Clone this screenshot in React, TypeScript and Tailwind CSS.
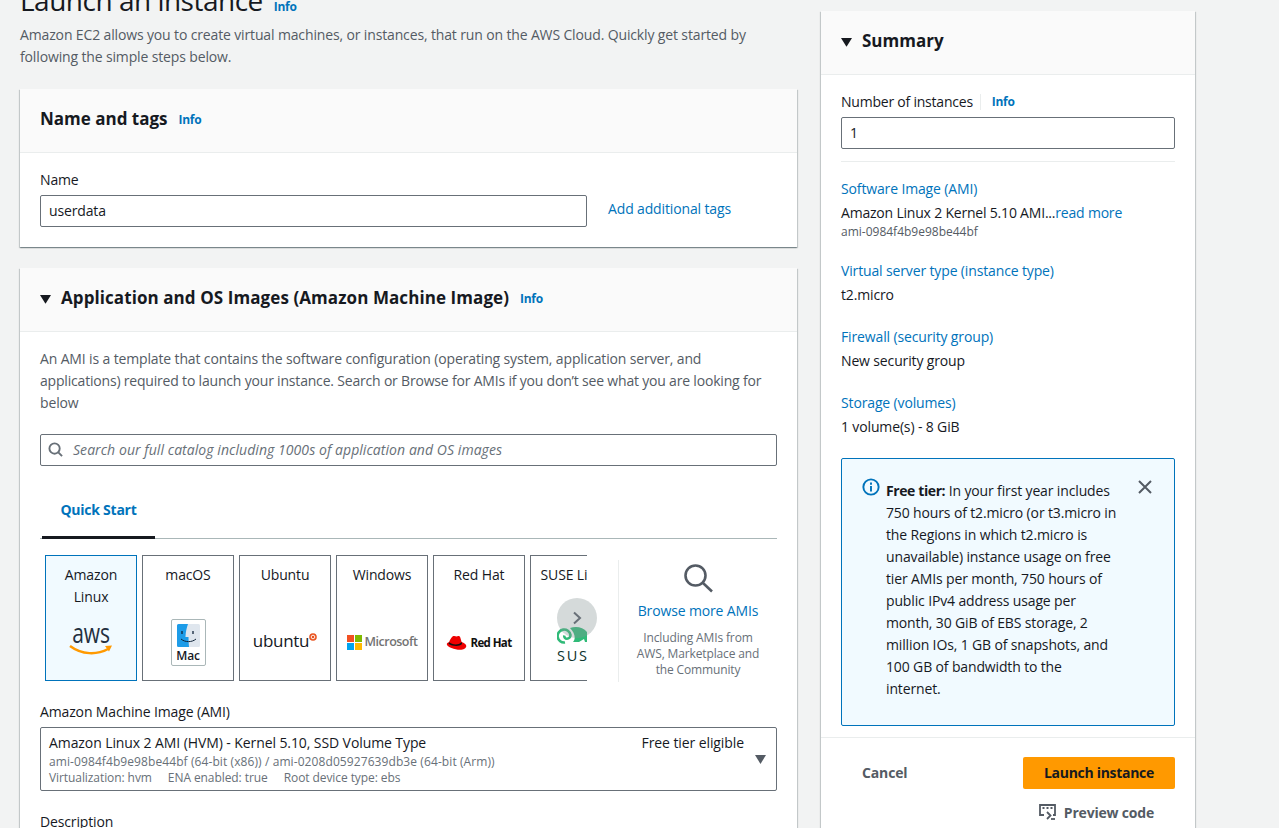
import React from "react";

function Info({ cls = "" }: { cls?: string }) {
  return <span className={"text-[12px] font-bold tracking-[-0.3px] text-[#0073bb] " + cls}>Info</span>;
}

function Caret({ size = 11 }: { size?: number }) {
  return (
    <svg width={size} height={size * 0.8} viewBox="0 0 10 8" className="shrink-0">
      <path d="M0 0h10L5 8z" fill="#16191f" />
    </svg>
  );
}

function Card({ title, active, children }: { title: string; active?: boolean; children: React.ReactNode }) {
  return (
    <div className={"w-[92px] h-[126px] shrink-0 border flex flex-col items-center pt-[8px] text-[14px] leading-[22px] text-center " + (active ? "border-[#0073bb] bg-[#f1faff]" : "border-[#687078] bg-white")}>
      <div className={"h-[44px] " + (active ? "whitespace-normal" : "whitespace-nowrap")}>{title}</div>
      <div className="flex-1 w-full flex items-center justify-center">{children}</div>
    </div>
  );
}

function Aws() {
  return (
    <div className="flex flex-col items-center mt-[-9px]">
      <span className="text-[21px] leading-[20px] font-normal text-[#232f3e] scale-y-[1.3]">aws</span>
      <svg width="44" height="12" viewBox="0 0 44 12" className="mt-[1px]">
        <path d="M1 2c12 9 27 9 38 3" stroke="#ff9900" strokeWidth="2.4" fill="none" />
        <path d="M36 2l7-.5-3 6z" fill="#ff9900" />
      </svg>
    </div>
  );
}

function Mac() {
  return (
    <div className="w-[35px] h-[47px] border border-[#aab7b8] rounded-[2px] flex flex-col items-center pt-[4px] bg-white mt-[-3px]">
      <svg width="23" height="23" viewBox="0 0 23 23">
        <rect width="23" height="23" rx="1.5" fill="#dfe6ee" />
        <path d="M1.5 0H11c-1.4 4-2.4 8-2.5 13h3c0 3.500.2 7 .5 10H1.500A1.500 1.500 0 0 1 0 21.500V1.500A1.500 1.500 0 0 1 1.500 0z" fill="#1d9ce8" />
        <path d="M5 7v3M16 7v3" stroke="#10243a" strokeWidth="1.3" />
        <path d="M4 15c4 3.500 11 3.500 15 0" stroke="#10243a" strokeWidth="1" fill="none" />
      </svg>
      <span className="text-[12px] leading-[14px] font-semibold text-[#16191f] mt-[2px]">Mac</span>
    </div>
  );
}

function Ubuntu() {
  return (
    <div className="flex items-start mt-[-7px]">
      <span className="text-[17px] leading-[22px] text-[#16191f] tracking-[-0.3px]">ubuntu</span>
      <svg width="8" height="8" viewBox="0 0 8 8" className="mt-[3px]">
        <circle cx="4" cy="4" r="3.800" fill="#e95420" />
        <circle cx="4" cy="4" r="1.800" fill="none" stroke="#fff" strokeWidth="0.9" />
      </svg>
    </div>
  );
}

function Microsoft() {
  return (
    <div className="flex items-center gap-[3px] mt-[-4px]">
      <div className="grid grid-cols-2 gap-[1px] w-[15px] shrink-0">
        <div className="h-[7px] bg-[#f25022]" />
        <div className="h-[7px] bg-[#7fba00]" />
        <div className="h-[7px] bg-[#00a4ef]" />
        <div className="h-[7px] bg-[#ffb900]" />
      </div>
      <span className="text-[12.500px] font-semibold leading-[16px] text-[#737373] tracking-[-0.5px]">Microsoft</span>
    </div>
  );
}

function RedHat() {
  return (
    <div className="flex items-center gap-[3px] mt-[-2px]">
      <svg width="21" height="16" viewBox="0 0 20 16" className="shrink-0">
        <path d="M6 1.500c1.500-1 3-.3 4 0 1.500-.8 3.200-.7 3.800 1l1.300 4.500c2.500 1 4.700 2.300 4.700 4 0 2.300-3 3.800-6 3.800C9 15 .3 12 .3 9.300c0-1 .9-1.800 2.200-2 .7-2 1.900-4.500 3.500-5.800z" fill="#e00" />
        <path d="M2.500 7.300c3 2.200 9 3.700 12.500-.3l.6 2c-3 3-10 2.200-13.600-.3z" fill="#111" />
      </svg>
      <span className="text-[11.500px] font-bold leading-[14px] text-[#111] tracking-[-0.6px] whitespace-nowrap">Red Hat</span>
    </div>
  );
}

function Suse() {
  return (
    <div className="flex flex-col items-start w-full pl-[26px] self-start mt-[19px]">
      <svg width="34" height="18" viewBox="0 0 34 18" className="shrink-0">
        <path d="M8 15.500a6.500 6.500 0 1 1 5.500-7.500c0 2.200-1.600 3.800-3.500 3.800S7 10 7.300 8.500" fill="none" stroke="#30ba78" strokeWidth="2.600" />
        <path d="M13 1c6-2 13-1 17 4l1-4v7l3 2v5h-6l-1-3-5 3h-6c3-3 2-9-3-14z" fill="#30ba78" />
      </svg>
      <span className="text-[14.500px] leading-[18px] font-medium tracking-[1.800px] text-[#0c322c] whitespace-nowrap mt-[2px]">SUSE</span>
    </div>
  );
}

function Field({ children, cls = "" }: { children: React.ReactNode; cls?: string }) {
  return <div className={"border border-[#687078] rounded-[2px] bg-white h-[32px] flex items-center px-[8px] pb-[1px] text-[14px] text-[#16191f] " + cls}>{children}</div>;
}

function SumItem({ title, value, sub }: { title: string; value: React.ReactNode; sub?: string }) {
  return (
    <div className="flex flex-col">
      <div className="text-[14px] leading-[22px] text-[#0073bb]">{title}</div>
      <div className="text-[14px] leading-[22px] mt-[2px] text-[#16191f]">{value}</div>
      {sub && <div className="text-[12px] leading-[16px] tracking-[0px] text-[#545b64]">{sub}</div>}
    </div>
  );
}

const shadow = "shadow-[0_1px_1px_0_rgba(0,28,36,0.3),1px_1px_1px_0_rgba(0,28,36,0.15),-1px_1px_1px_0_rgba(0,28,36,0.15)]";

export default function App() {
  return (
    <div className="h-[828px] w-[1279px] overflow-hidden bg-[#f2f3f3] flex items-start text-[#16191f] font-['Open_Sans',sans-serif] tracking-[-0.14px]">
      <main className="ml-[20px] w-[777px] shrink-0 flex flex-col mt-[-18px]">
        <div className="flex items-baseline gap-[11px] h-[42px]">
          <h1 className="text-[28px] leading-[36px] font-normal tracking-[-0.5px] text-[#16191f]">Launch an instance</h1>
          <Info />
        </div>
        <p className="text-[14px] leading-[22px] text-[#545b64] whitespace-nowrap">
          Amazon EC2 allows you to create virtual machines, or instances, that run on the AWS Cloud. Quickly get started by<br />following the simple steps below.
        </p>

        <section className={"mt-[21px] bg-white " + shadow}>
          <header className="h-[64px] bg-[#fafafa] border-b border-[#eaeded] flex items-center px-[20px] gap-[11px]">
            <h2 className="text-[17px] leading-[22px] font-bold tracking-[0px] mt-[-3px]">Name and tags</h2>
            <Info cls="mt-[-1px]" />
          </header>
          <div className="px-[20px] pt-[16px] pb-[20px]">
            <div className="text-[14px] leading-[22px]">Name</div>
            <div className="flex items-center mt-[4px]">
              <Field cls="w-[547px]">userdata</Field>
              <span className="ml-[21px] text-[14px] text-[#0073bb] mt-[-5px]">Add additional tags</span>
            </div>
          </div>
        </section>

        <section className={"mt-[21px] bg-white " + shadow}>
          <header className="h-[64px] bg-[#fafafa] border-b border-[#eaeded] flex items-center px-[20px]">
            <Caret />
            <h2 className="text-[17px] leading-[22px] font-bold tracking-[0.08px] ml-[10px] mt-[-3px]">Application and OS Images (Amazon Machine Image)</h2>
            <Info cls="mt-[-1px] ml-[11px]" />
          </header>
          <div className="px-[20px] pt-[16px] pb-[40px]">
            <p className="text-[14px] leading-[22px] text-[#545b64] whitespace-nowrap">
              An AMI is a template that contains the software configuration (operating system, application server, and<br />
              <span className="tracking-[-0.19px]">applications) required to launch your instance. Search or Browse for AMIs if you don’t see what you are looking for</span><br />
              below
            </p>
            <Field cls="mt-[20px] gap-[10px] pl-[7px]">
              <svg width="15" height="15" viewBox="0 0 16 16" fill="none" stroke="#687078" strokeWidth="2" className="shrink-0">
                <circle cx="7" cy="7" r="5.500" />
                <path d="M11 11L15 15" />
              </svg>
              <span className="italic text-[#687078] tracking-[0.06px]">Search our full catalog including 1000s of application and OS images</span>
            </Field>

            <div className="mt-[20px] h-[53px] border-b border-[#aab7b8] flex">
              <div className="w-[113px] ml-[2px] h-[53px] border-b-[3px] border-[#16191f] flex items-center justify-center text-[14px] font-bold tracking-[-0.25px] text-[#0073bb] pb-[3px]">Quick Start</div>
            </div>

            <div className="flex mt-[16px] ml-[5px]">
              <div className="relative w-[542px] shrink-0">
                <div className="flex gap-[5px] overflow-hidden">
                  <Card title="Amazon Linux" active><Aws /></Card>
                  <Card title="macOS"><Mac /></Card>
                  <Card title="Ubuntu"><Ubuntu /></Card>
                  <Card title="Windows"><Microsoft /></Card>
                  <Card title="Red Hat"><RedHat /></Card>
                  <Card title="SUSE Linux"><Suse /></Card>
                </div>
                <div className="absolute left-[512px] top-[43px] w-[40px] h-[40px] rounded-full bg-[#879596]/35 flex items-center justify-center">
                  <svg width="10" height="14" viewBox="0 0 10 14" fill="none" stroke="#687078" strokeWidth="2"><path d="M2 1.500L8 7l-6 5.500" /></svg>
                </div>
              </div>
              <div className="ml-[31px] mt-[5px] w-[159px] h-[122px] border-l border-[#eaeded] flex flex-col items-center">
                <svg width="30" height="30" viewBox="0 0 30 30" fill="none" stroke="#545b64" strokeWidth="2.600" className="mt-[3px]">
                  <circle cx="12.500" cy="12.500" r="10" />
                  <path d="M20 20l9 8.500" />
                </svg>
                <div className="text-[14px] leading-[22px] text-[#0073bb] mt-[7px]">Browse more AMIs</div>
                <div className="text-[12px] leading-[16px] text-[#687078] text-center mt-[8px]">Including AMIs from<br />AWS, Marketplace and<br />the Community</div>
              </div>
            </div>

            <div className="text-[14px] leading-[22px] mt-[19px]">Amazon Machine Image (AMI)</div>
            <div className="mt-[4px] h-[64px] border border-[#687078] rounded-[2px] flex pl-[8px] pr-[10px] pt-[5px]">
              <div className="flex flex-col flex-1">
                <div className="text-[14px] leading-[20px] tracking-[-0.09px] flex justify-between pr-[11px]">
                  <span>Amazon Linux 2 AMI (HVM) - Kernel 5.10, SSD Volume Type</span>
                  <span>Free tier eligible</span>
                </div>
                <div className="text-[12px] leading-[16px] tracking-[0.09px] text-[#687078] mt-[1px]">ami-0984f4b9e98be44bf (64-bit (x86)) / ami-0208d05927639db3e (64-bit (Arm))</div>
                <div className="text-[12px] leading-[16px] tracking-[-0.08px] text-[#687078] flex gap-[16px]">
                  <span>Virtualization: hvm</span><span>ENA enabled: true</span><span>Root device type: ebs</span>
                </div>
              </div>
              <div className="mt-[22px]"><svg width="11" height="9" viewBox="0 0 10 8"><path d="M0 0h10L5 8z" fill="#545b64" /></svg></div>
            </div>
            <div className="text-[14px] leading-[22px] mt-[20px]">Description</div>
          </div>
        </section>
      </main>

      <aside className={"ml-[24px] mt-[11px] w-[374px] shrink-0 bg-white " + shadow}>
        <header className="h-[64px] bg-[#fafafa] border-b border-[#eaeded] flex items-center px-[20px]">
          <Caret />
          <h2 className="text-[17px] leading-[22px] font-bold tracking-[0px] ml-[10px] mt-[-3px]">Summary</h2>
        </header>
        <div className="px-[20px] pt-[16px]">
          <div className="flex items-center text-[14px] leading-[22px]">
            <span className="tracking-[-0.22px]">Number of instances</span>
            <span className="w-px h-[16px] bg-[#eaeded] ml-[7px] mr-[11px]" />
            <Info />
          </div>
          <Field cls="mt-[4px]">1</Field>
          <div className="h-px bg-[#eaeded] mt-[12px]" />
          <div className="flex flex-col gap-[20px] mt-[16px]">
            <SumItem title="Software Image (AMI)" value={<span className="tracking-[-0.2px]">Amazon Linux 2 Kernel 5.10 AMI...<span className="text-[#0073bb]">read more</span></span>} sub="ami-0984f4b9e98be44bf" />
            <SumItem title="Virtual server type (instance type)" value="t2.micro" />
            <SumItem title="Firewall (security group)" value="New security group" />
            <SumItem title="Storage (volumes)" value="1 volume(s) - 8 GiB" />
          </div>
          <div className="mt-[20px] h-[268px] border border-[#0073bb] rounded-[2px] bg-[#f1faff] flex pl-[20px] pr-[20px] pt-[20px]">
            <svg width="18" height="18" viewBox="0 0 16 16" fill="none" stroke="#0073bb" strokeWidth="1.700" className="shrink-0 mt-[-1px]">
              <circle cx="8" cy="8" r="6.800" />
              <path d="M8 7v5M8 4v2" />
            </svg>
            <p className="ml-[6px] w-[244px] shrink-0 text-[14px] leading-[22px] text-[#16191f] mt-[1px] whitespace-nowrap">
              <b className="tracking-[-0.4px]">Free tier:</b> In your first year includes<br />750 hours of t2.micro (or t3.micro in<br />the Regions in which t2.micro is<br />unavailable) instance usage on free<br />tier AMIs per month, 750 hours of<br />public IPv4 address usage per<br />month, 30 GiB of EBS storage, 2<br />million IOs, 1 GB of snapshots, and<br />100 GB of bandwidth to the<br />internet.
            </p>
            <svg width="14" height="14" viewBox="0 0 14 14" fill="none" stroke="#545b64" strokeWidth="2" className="ml-[8px] shrink-0 mt-[1px]">
              <path d="M1 1l12 12M13 1L1 13" />
            </svg>
          </div>
        </div>
        <div className="h-px bg-[#eaeded] mt-[11px]" />
        <div className="px-[20px] pt-[19px] pb-[8px] flex flex-col items-end">
          <div className="flex items-center justify-between w-full">
            <span className="ml-[21px] text-[14px] font-bold text-[#545b64] pb-[1px]">Cancel</span>
            <span className="w-[152px] h-[32px] rounded-[2px] bg-[#ff9900] flex items-center justify-center pb-[1px] text-[14px] font-bold tracking-[-0.3px] text-[#16191f]">Launch instance</span>
          </div>
          <div className="flex items-center mt-[7px] mr-[21px] gap-[8px] h-[32px]">
            <svg width="17" height="16" viewBox="0 0 17 16" fill="none" stroke="#545b64" strokeWidth="1.800" className="shrink-0">
              <path d="M5 11H1V1h15v10h-2" />
              <path d="M8 8l3.500 3.500L8 15M3.500 4h2M7.500 4h2M11.500 4h2" />
              <path d="M12 15h4" />
            </svg>
            <span className="text-[14px] font-bold tracking-[-0.2px] text-[#545b64]">Preview code</span>
          </div>
        </div>
      </aside>
    </div>
  );
}
